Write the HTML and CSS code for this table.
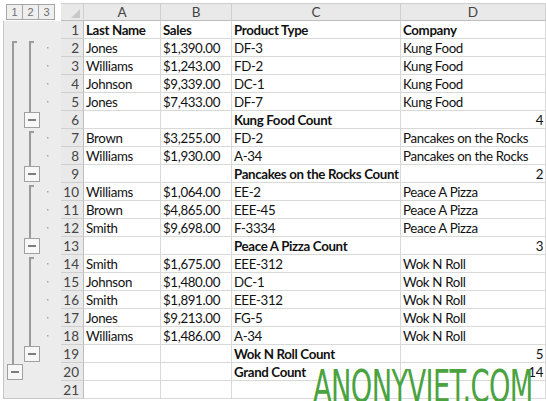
FILE: index.html
```html
<!DOCTYPE html>
<html>
<head>
<meta charset="utf-8">
<link rel="stylesheet" href="styles.css">
</head>
<body>
<div class="sheet">
  <div class="levels"><span class="lvl">1</span><span class="lvl">2</span><span class="lvl">3</span></div>
  <div class="hdr corner"><span class="tri"></span></div>
  <div class="hdr col">A</div>
  <div class="hdr col">B</div>
  <div class="hdr col">C</div>
  <div class="hdr col">D</div>

  <div class="outline">
    <svg width="57" height="378" viewBox="0 0 57 378">
      <g fill="none" stroke="#9b9b9b" stroke-width="2">
        <path d="M13 21 H9 V343"/>
        <path d="M30 21 H26 V91"/>
        <path d="M30 111 H26 V145"/>
        <path d="M30 165 H26 V217"/>
        <path d="M30 237 H26 V325"/>
      </g>
      <g fill="#f7f7f7" stroke="#a0a0a0" stroke-width="1">
        <rect x="20.5" y="91.5" width="15" height="15"/>
        <rect x="20.5" y="145.5" width="15" height="15"/>
        <rect x="20.5" y="217.5" width="15" height="15"/>
        <rect x="20.5" y="325.5" width="15" height="15"/>
        <rect x="3.5" y="343.5" width="15" height="15"/>
      </g>
      <g stroke="#555" stroke-width="1.5">
        <path d="M24 99 H32"/>
        <path d="M24 153 H32"/>
        <path d="M24 225 H32"/>
        <path d="M24 333 H32"/>
        <path d="M7 351 H15"/>
      </g>
      <g fill="#a8a8a8">
        <rect x="43" y="26" width="1.5" height="1.5"/>
        <rect x="43" y="44" width="1.5" height="1.5"/>
        <rect x="43" y="62" width="1.5" height="1.5"/>
        <rect x="43" y="80" width="1.5" height="1.5"/>
        <rect x="43" y="116" width="1.5" height="1.5"/>
        <rect x="43" y="134" width="1.5" height="1.5"/>
        <rect x="43" y="170" width="1.5" height="1.5"/>
        <rect x="43" y="188" width="1.5" height="1.5"/>
        <rect x="43" y="206" width="1.5" height="1.5"/>
        <rect x="43" y="242" width="1.5" height="1.5"/>
        <rect x="43" y="260" width="1.5" height="1.5"/>
        <rect x="43" y="278" width="1.5" height="1.5"/>
        <rect x="43" y="296" width="1.5" height="1.5"/>
        <rect x="43" y="314" width="1.5" height="1.5"/>
      </g>
    </svg>
  </div>

  <div class="rh">1</div><div class="c b">Last Name</div><div class="c b">Sales</div><div class="c b">Product Type</div><div class="c b">Company</div>
  <div class="rh">2</div><div class="c">Jones</div><div class="c">$1,390.00</div><div class="c">DF-3</div><div class="c">Kung Food</div>
  <div class="rh">3</div><div class="c">Williams</div><div class="c">$1,243.00</div><div class="c">FD-2</div><div class="c">Kung Food</div>
  <div class="rh">4</div><div class="c">Johnson</div><div class="c">$9,339.00</div><div class="c">DC-1</div><div class="c">Kung Food</div>
  <div class="rh">5</div><div class="c">Jones</div><div class="c">$7,433.00</div><div class="c">DF-7</div><div class="c">Kung Food</div>
  <div class="rh">6</div><div class="c"></div><div class="c"></div><div class="c b">Kung Food Count</div><div class="c r">4</div>
  <div class="rh">7</div><div class="c">Brown</div><div class="c">$3,255.00</div><div class="c">FD-2</div><div class="c">Pancakes on the Rocks</div>
  <div class="rh">8</div><div class="c">Williams</div><div class="c">$1,930.00</div><div class="c">A-34</div><div class="c">Pancakes on the Rocks</div>
  <div class="rh">9</div><div class="c"></div><div class="c"></div><div class="c b">Pancakes on the Rocks Count</div><div class="c r">2</div>
  <div class="rh">10</div><div class="c">Williams</div><div class="c">$1,064.00</div><div class="c">EE-2</div><div class="c">Peace A Pizza</div>
  <div class="rh">11</div><div class="c">Brown</div><div class="c">$4,865.00</div><div class="c">EEE-45</div><div class="c">Peace A Pizza</div>
  <div class="rh">12</div><div class="c">Smith</div><div class="c">$9,698.00</div><div class="c">F-3334</div><div class="c">Peace A Pizza</div>
  <div class="rh">13</div><div class="c"></div><div class="c"></div><div class="c b">Peace A Pizza Count</div><div class="c r">3</div>
  <div class="rh">14</div><div class="c">Smith</div><div class="c">$1,675.00</div><div class="c">EEE-312</div><div class="c">Wok N Roll</div>
  <div class="rh">15</div><div class="c">Johnson</div><div class="c">$1,480.00</div><div class="c">DC-1</div><div class="c">Wok N Roll</div>
  <div class="rh">16</div><div class="c">Smith</div><div class="c">$1,891.00</div><div class="c">EEE-312</div><div class="c">Wok N Roll</div>
  <div class="rh">17</div><div class="c">Jones</div><div class="c">$9,213.00</div><div class="c">FG-5</div><div class="c">Wok N Roll</div>
  <div class="rh">18</div><div class="c">Williams</div><div class="c">$1,486.00</div><div class="c">A-34</div><div class="c">Wok N Roll</div>
  <div class="rh">19</div><div class="c"></div><div class="c"></div><div class="c b">Wok N Roll Count</div><div class="c r">5</div>
  <div class="rh">20</div><div class="c"></div><div class="c"></div><div class="c b">Grand Count</div><div class="c r">14</div>
  <div class="rh">21</div><div class="c"></div><div class="c"></div><div class="c"></div><div class="c"></div>
</div>
<div class="watermark">ANONYVIET.COM</div>
</body>
</html>
```

FILE: styles.css
```css
html, body {
  margin: 0;
  padding: 0;
  background: #ffffff;
}
body {
  padding: 3px 0 0 4px;
  font-family: Lato, "Liberation Sans", sans-serif;
  overflow: hidden;
  position: relative;
  height: 401px;
  box-sizing: border-box;
}
.sheet {
  display: grid;
  grid-template-columns: 57px 23px 77px 71px 169px 145px;
  grid-template-rows: 18px repeat(21, 18px);
}
.levels {
  display: flex;
  align-items: flex-start;
  padding: 1px 0 0 2px;
  box-sizing: border-box;
  background: #ffffff;
}
.lvl {
  width: 17px;
  height: 16px;
  box-sizing: border-box;
  border: 1px solid #a6a6a6;
  margin-right: -1px;
  background: #efefef;
  color: #6e6e6e;
  font-size: 11px;
  line-height: 14px;
  text-align: center;
  font-family: "Liberation Sans", sans-serif;
}
.hdr {
  background: #e9e9e9;
  border-top: 1px solid #cfcfcf;
  border-bottom: 1px solid #bdbdbd;
  border-right: 1px solid #cfcfcf;
  box-sizing: border-box;
  color: #444;
  font-size: 13.5px;
  line-height: 17px;
}
.corner {
  position: relative;
}
.tri {
  position: absolute;
  right: 3px;
  bottom: 2px;
  width: 0;
  height: 0;
  border-left: 9px solid transparent;
  border-bottom: 9px solid #c9c9c9;
}
.col {
  text-align: center;
}
.outline {
  grid-column: 1;
  grid-row: 2 / span 21;
  background: #ececec;
  border-left: 1px solid #c6c6c6;
  border-bottom: 1px solid #c6c6c6;
  box-sizing: border-box;
  margin-left: -1px;
}
.outline svg {
  display: block;
}
.rh {
  grid-column: 2;
  background: #e9e9e9;
  border-right: 1px solid #bdbdbd;
  border-bottom: 1px solid #cfcfcf;
  box-sizing: border-box;
  text-align: right;
  padding: 1px 4px 0 0;
  color: #444;
  font-size: 13.5px;
  line-height: 17px;
}
.c {
  border-right: 1px solid #d9d9d9;
  border-bottom: 1px solid #d9d9d9;
  box-sizing: border-box;
  padding: 1px 2px 0;
  font-size: 13.3px;
  letter-spacing: -0.35px;
  line-height: 17px;
  color: #111;
  white-space: nowrap;
  overflow: hidden;
}
.b {
  font-weight: bold;
}
.r {
  text-align: right;
}
.watermark {
  position: absolute;
  left: 313px;
  top: 365px;
  font-family: "DejaVu Sans", sans-serif;
  font-size: 44px;
  line-height: 44px;
  color: #4aa33f;
  white-space: nowrap;
  transform-origin: 0 0;
  transform: scaleX(0.62);
  letter-spacing: -1px;
}
```
